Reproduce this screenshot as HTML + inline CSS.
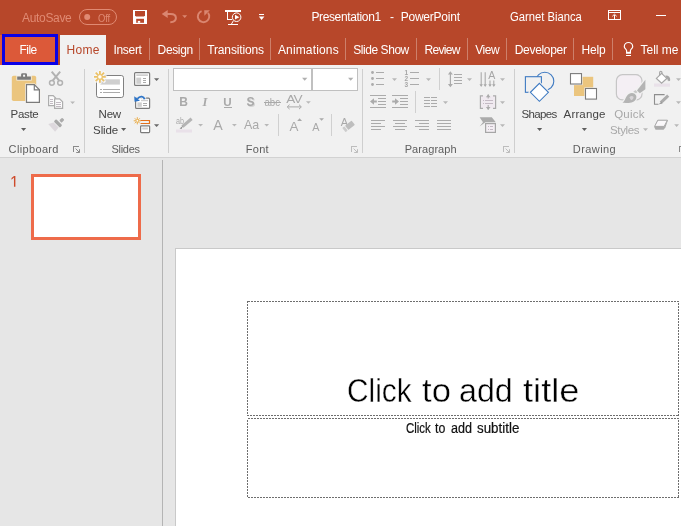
<!DOCTYPE html>
<html lang="en">
<head>
<meta charset="utf-8">
<title>Presentation1 - PowerPoint</title>
<style>
html,body{margin:0;padding:0;}
body{width:681px;height:526px;overflow:hidden;position:relative;background:#E6E6E6;font-family:"Liberation Sans",sans-serif;font-size:12px;color:#444;}
.abs{position:absolute;}
.t{position:absolute;white-space:nowrap;line-height:16px;height:16px;font-size:12px;}
#titlebar{left:0;top:0;width:681px;height:65px;background:#B7472A;}
#ribbon{left:0;top:65px;width:681px;height:92px;background:#F1F1F1;}
#ribbonline{left:0;top:157px;width:681px;height:1px;background:#D2D2D2;}
.tsep{position:absolute;top:38px;width:1px;height:22px;background:#CD806B;}
.gsep{position:absolute;top:69px;width:1px;height:84px;background:#CFCFCF;}
.isep{position:absolute;width:1px;background:#D0D0D0;}
svg{position:absolute;overflow:visible;}
</style>
</head>
<body>
<div id="app" style="position:absolute;left:0;top:0;width:681px;height:526px;overflow:hidden;will-change:transform;">
<!-- ===== backgrounds ===== -->
<div id="titlebar" class="abs"></div>
<div id="ribbon" class="abs"></div>
<div id="ribbonline" class="abs"></div>
<div class="abs" id="filehover" style="left:0;top:35px;width:3px;height:30px;background:#DC5939;"></div>
<div class="abs" id="filebox" style="left:2px;top:34px;width:50px;height:25px;border:3px solid #0A00E6;background:#DC5939;"></div>
<div class="abs" id="hometab" style="left:60px;top:35px;width:46px;height:31px;background:#F1F1F1;"></div>

<!-- ===== texts ===== -->
<div class="t" id="autosave" style="left:22.1px;top:9.5px;letter-spacing:-0.34px;color:#E08A73;">AutoSave</div>
<div class="t" id="off" style="left:98.3px;top:9.5px;letter-spacing:-0.2px;color:#E08A73;font-size:11px;transform:scaleX(0.86);transform-origin:0 50%;">Off</div>
<div class="t" id="ttl1" style="left:311.4px;top:9px;letter-spacing:-0.36px;color:#fff;">Presentation1</div>
<div class="t" id="ttl2" style="left:390px;top:9px;letter-spacing:0px;color:#fff;">-</div>
<div class="t" id="ttl3" style="left:400.7px;top:9px;letter-spacing:-0.23px;color:#fff;">PowerPoint</div>
<div class="t" id="user" style="left:509.6px;top:8.5px;color:#fff;transform:scaleX(0.937);transform-origin:0 50%;">Garnet Bianca</div>
<div class="t" id="tfile" style="left:19.5px;top:42px;letter-spacing:-0.55px;color:#fff;">File</div>
<div class="t" id="thome" style="left:66.5px;top:42px;letter-spacing:0.33px;color:#B7472A;">Home</div>
<div class="t" id="tinsert" style="left:113.5px;top:42px;letter-spacing:-0.32px;color:#fff;">Insert</div>
<div class="t" id="tdesign" style="left:157.6px;top:42px;letter-spacing:-0.36px;color:#fff;">Design</div>
<div class="t" id="ttrans" style="left:207.3px;top:42px;letter-spacing:-0.16px;color:#fff;">Transitions</div>
<div class="t" id="tanim" style="left:277.9px;top:42px;letter-spacing:0.16px;color:#fff;">Animations</div>
<div class="t" id="tshow" style="left:353.3px;top:42px;letter-spacing:-0.45px;color:#fff;">Slide Show</div>
<div class="t" id="treview" style="left:424.5px;top:42px;letter-spacing:-0.68px;color:#fff;">Review</div>
<div class="t" id="tview" style="left:475.3px;top:42px;letter-spacing:-0.51px;color:#fff;">View</div>
<div class="t" id="tdev" style="left:514.7px;top:42px;letter-spacing:-0.3px;color:#fff;">Developer</div>
<div class="t" id="thelp" style="left:581.6px;top:42px;letter-spacing:-0.24px;color:#fff;">Help</div>
<div class="t" id="ttell" style="left:640.6px;top:42px;letter-spacing:-0.04px;color:#fff;">Tell me</div>
<div class="t" id="bpaste" style="left:10.6px;top:105.7px;letter-spacing:-0.33px;font-size:11.5px;color:#444;">Paste</div>
<div class="t" id="bnew" style="left:98.6px;top:105.7px;letter-spacing:-0.25px;font-size:11.5px;color:#444;">New</div>
<div class="t" id="bslide" style="left:93.1px;top:121.5px;letter-spacing:-0.12px;font-size:11.5px;color:#444;">Slide</div>
<div class="t" id="bshapes" style="left:521.5px;top:105.7px;letter-spacing:-0.63px;font-size:11.5px;color:#444;">Shapes</div>
<div class="t" id="barrange" style="left:563.6px;top:105.7px;letter-spacing:0.15px;font-size:11.5px;color:#444;">Arrange</div>
<div class="t" id="bquick" style="left:614.2px;top:105.7px;letter-spacing:0.24px;font-size:11.5px;color:#A8A8A8;">Quick</div>
<div class="t" id="bstyles" style="left:610.0px;top:121.5px;letter-spacing:-0.37px;font-size:11.5px;color:#A8A8A8;">Styles</div>
<div class="t" id="gclip" style="left:8.6px;top:141px;letter-spacing:0.35px;font-size:11px;color:#5E5E5E;">Clipboard</div>
<div class="t" id="gslides" style="left:111.4px;top:141px;letter-spacing:-0.25px;font-size:11px;color:#5E5E5E;">Slides</div>
<div class="t" id="gfont" style="left:245.8px;top:141px;letter-spacing:0.28px;font-size:11px;color:#5E5E5E;">Font</div>
<div class="t" id="gpara" style="left:404.7px;top:141px;letter-spacing:0.07px;font-size:11px;color:#5E5E5E;">Paragraph</div>
<div class="t" id="gdraw" style="left:572.8px;top:141px;letter-spacing:0.43px;font-size:11px;color:#5E5E5E;">Drawing</div>


<!-- ===== tab separators ===== -->
<div class="tsep" style="left:149px"></div>
<div class="tsep" style="left:199px"></div>
<div class="tsep" style="left:270px"></div>
<div class="tsep" style="left:345px"></div>
<div class="tsep" style="left:416px"></div>
<div class="tsep" style="left:467px"></div>
<div class="tsep" style="left:506px"></div>
<div class="tsep" style="left:573px"></div>
<div class="tsep" style="left:612px"></div>

<!-- ===== group separators ===== -->
<div class="gsep" style="left:84px"></div>
<div class="gsep" style="left:168px"></div>
<div class="gsep" style="left:362px"></div>
<div class="gsep" style="left:514px"></div>
<div class="isep" style="left:278px;top:114px;height:22px;"></div>
<div class="isep" style="left:331px;top:114px;height:22px;"></div>
<div class="isep" style="left:439px;top:68px;height:22px;"></div>
<div class="isep" style="left:415px;top:91px;height:22px;"></div>

<!-- font boxes -->
<div class="abs" id="fontbox" style="left:173px;top:68px;width:137px;height:21px;border:1px solid #C0C0C0;background:#fff;"></div>
<div class="abs" id="sizebox" style="left:311px;top:68px;width:44px;height:21px;border:1px solid #C0C0C0;border-left-width:2px;background:#fff;"></div>

<!-- ===== title bar icons ===== -->
<svg id="qat" style="left:0;top:0;" width="681" height="65" viewBox="0 0 681 65">
 <!-- autosave toggle -->
 <rect x="79.5" y="9.5" width="37" height="15" rx="7.5" fill="none" stroke="#E08A73" stroke-width="1"/>
 <circle cx="87.2" cy="17" r="3" fill="#E08A73"/>
 <!-- save -->
 <g>
  <rect x="133" y="10" width="14" height="14" fill="#fff"/>
  <path d="M135,11.1 H145 V15.2 L144,16.4 H136 L135,15.2 Z" fill="#B7472A"/>
  <rect x="136.2" y="18.8" width="7.8" height="4" fill="#B7472A"/>
  <rect x="137.8" y="20.9" width="2.4" height="1.9" fill="#fff"/>
 </g>
 <!-- undo -->
 <path d="M161.7,14 L167.7,9.9 V18 Z" fill="#DA8670"/>
 <path d="M167,14 H170.6 C174.4,14 175.9,16.2 175.9,18.1 C175.9,20.4 174,22.2 170.3,22.2" fill="none" stroke="#DA8670" stroke-width="2"/>
 <path d="M182.2,15.3 h5 l-2.5,2.6 z" fill="#DA8670"/>
 <!-- repeat -->
 <g fill="none" stroke="#DA8670" stroke-width="1.8">
  <path d="M201.6,11.1 A5.7,5.7 0 1 0 208,12.9" stroke-width="1.9"/>
  <path d="M204.2,10.3 H209.9 L204.4,15.7 Z" fill="#DA8670" stroke="none"/>
 </g>
 <!-- start from beginning -->
 <g shape-rendering="crispEdges" fill="#fff">
  <rect x="225" y="10" width="16" height="2"/>
  <rect x="227" y="12" width="1" height="8"/>
  <rect x="227" y="19" width="5" height="1"/>
  <rect x="228" y="24" width="10" height="1"/>
 </g>
 <path d="M233.5,20.5 L231.5,24" stroke="#fff" stroke-width="1" fill="none"/>
 <circle cx="236.6" cy="17.2" r="4.3" fill="#B7472A" stroke="#fff" stroke-width="1"/>
 <path d="M235,14.8 V19.6 L239.3,17.2 Z" fill="#fff"/>
 <!-- customize qat -->
 <rect x="259" y="14" width="5" height="1" fill="#fff" shape-rendering="crispEdges"/>
 <path d="M258.8,16.6 h5.6 l-2.8,3.4 z" fill="#fff"/>
 <!-- ribbon display options -->
 <g shape-rendering="crispEdges" fill="none" stroke="#fff" stroke-width="1">
  <rect x="608.5" y="10.5" width="12" height="9"/>
  <path d="M609,12.5 H620"/>
  <path d="M614.5,14.5 V19"/>
 </g>
 <path d="M612.3,16.3 L614.5,14.2 L616.7,16.3" fill="none" stroke="#fff" stroke-width="1"/>
 <!-- minimize -->
 <rect x="656" y="15" width="10" height="1" fill="#fff" shape-rendering="crispEdges"/>
 <!-- light bulb -->
 <path d="M626.6,52.2 V50.8 C626.6,49.2 624.3,48.6 624.3,46.7 A4.2,4.2 0 1 1 632.7,46.7 C632.7,48.6 630.4,49.2 630.4,50.8 V52.2" fill="none" stroke="#fff" stroke-width="1.2"/>
 <rect x="626" y="51.8" width="5" height="2" fill="#fff"/>
 <rect x="626" y="55" width="5" height="1" fill="#fff"/>
</svg>

<!-- ===== ribbon icons: clipboard + slides ===== -->
<svg id="rib1" style="left:0;top:0;" width="681" height="160" viewBox="0 0 681 160">
 <!-- paste -->
 <rect x="11.8" y="75.7" width="24.4" height="25.4" rx="1.8" fill="#EBC57E"/>
 <rect x="16.4" y="72.4" width="15.3" height="8.2" fill="#F1F1F1" opacity=".9"/>
 <path d="M17.2,76.4 H21.1 V74.6 Q21.1,73.2 22.5,73.2 H25.6 Q27,73.2 27,74.6 V76.4 H30.9 V79.8 H17.2 Z" fill="#7B7B7B"/>
 <rect x="23.1" y="74.7" width="2" height="2" fill="#F6F6F6"/>
 <path d="M25.2,83.4 H34.8 L40.7,89.2 V103.6 H25.2 Z" fill="#F4F1EC"/>
 <path d="M26.5,84.7 H34.3 L39.4,89.8 V102.3 H26.5 Z" fill="#fff" stroke="#7B7B7B" stroke-width="1.2" stroke-linejoin="miter"/>
 <path d="M34.3,84.7 V89.8 H39.4" fill="none" stroke="#7B7B7B" stroke-width="1.2"/>
 <path d="M21,128 h5.2 l-2.6,3 z" fill="#5E5E5E"/>
 <!-- cut -->
 <g fill="none" stroke="#B2B2B2" stroke-width="1.5">
  <path d="M51.7,71.6 L59.2,80.6" stroke-width="2"/>
  <path d="M60.2,71.6 L52.7,80.6" stroke-width="2"/>
  <circle cx="51.9" cy="82.8" r="2.4"/>
  <circle cx="60.1" cy="82.8" r="2.4"/>
 </g>
 <!-- copy -->
 <g fill="#FBFBFB" stroke="#ADADAD" stroke-width="1.2">
  <path d="M48.6,95.6 H53.2 L55.6,98 V105.6 H48.6 Z"/>
  <path d="M54.6,98.8 H59.6 L62.6,101.8 V108.3 H54.6 Z"/>
 </g>
 <g stroke="#C2BAC2" stroke-width="1" fill="none" shape-rendering="crispEdges">
  <path d="M50,99.5 H53 M50,101.5 H53 M50,103.5 H53"/>
  <path d="M56,102.5 H61 M56,104.5 H61 M56,106.5 H61"/>
 </g>
 <path d="M70.2,101.4 h4.8 l-2.4,2.5 z" fill="#B8B8B8"/>
 <!-- format painter -->
 <g transform="translate(58,123.4) rotate(45)">
  <rect x="-1.2" y="-7" width="3.2" height="4" rx=".8" fill="#ABABAB"/>
  <rect x="-4.35" y="-1.65" width="8.7" height="3.3" rx="1" fill="#A8A8A8"/>
  <path d="M-3.7,2.4 H3.3 L3.9,8 L-6.4,7.4 Z" fill="#DDD8DD"/>
 </g>
 <!-- clipboard launcher -->
 <g fill="none" stroke="#8A8A8A" stroke-width="1" shape-rendering="crispEdges">
  <path d="M73.5,152 V146.5 H79"/>
 </g>
 <path d="M75.6,148.6 L79.4,152.4 M79.5,149.2 V152.5 H76.2" stroke="#8A8A8A" stroke-width="1" fill="none"/>

 <!-- new slide -->
 <rect x="96.5" y="75.5" width="27" height="22" rx="2.2" fill="#fff" stroke="#808080" stroke-width="1"/>
 <rect x="100.3" y="79.3" width="19.6" height="5.3" fill="#CFCFCF"/>
 <g stroke="#ABABAB" stroke-width="1" shape-rendering="crispEdges">
  <path d="M100,89.5 H102 M103,89.5 H120 M100,92.5 H102 M103,92.5 H120"/>
 </g>
 <g stroke="#F6F6F6" stroke-width="3.4" stroke-linecap="round">
  <path d="M99.9,71 V82.8 M94,76.9 H105.8 M95.7,72.7 L104.1,81.1 M104.1,72.7 L95.7,81.1"/>
 </g>
 <g stroke="#EBC268" stroke-width="1.8">
  <path d="M99.9,71 V82.8 M94,76.9 H105.8 M95.7,72.7 L104.1,81.1 M104.1,72.7 L95.7,81.1"/>
 </g>
 <circle cx="99.9" cy="76.9" r="2.3" fill="#fff" stroke="#EBC268" stroke-width="1"/>
 <path d="M121,128 h5.2 l-2.6,3 z" fill="#5E5E5E"/>
 <!-- layout -->
 <rect x="134.6" y="72.6" width="15" height="12.8" rx="1" fill="#fff" stroke="#7B7B7B" stroke-width="1.2"/>
 <rect x="136.3" y="74.3" width="11.6" height="1.7" fill="#CFCFCF"/>
 <rect x="136.3" y="77.6" width="4.8" height="6.2" fill="#CFCFCF"/>
 <g stroke="#ABABAB" stroke-width="1" shape-rendering="crispEdges"><path d="M142.5,78.5 H146 M142.5,80.5 H146 M142.5,82.5 H146"/></g>
 <path d="M154,78.3 h5.2 l-2.6,2.8 z" fill="#6A6A6A"/>
 <!-- reset -->
 <rect x="135.6" y="98.2" width="14" height="10.2" rx="1" fill="#fff" stroke="#7B7B7B" stroke-width="1.2"/>
 <rect x="141" y="99.8" width="7" height="1.4" fill="#CFCFCF"/>
 <rect x="137.4" y="102.4" width="4.4" height="4.4" fill="#CFCFCF"/>
 <g stroke="#ABABAB" stroke-width="1" shape-rendering="crispEdges"><path d="M143,103.5 H147 M143,105.5 H147"/></g>
 <path d="M144.6,99 C143.8,96.6 140.6,95.4 137.8,98.6" fill="none" stroke="#F1F1F1" stroke-width="4"/>
 <path d="M144.6,99.2 C143.8,96.4 140.2,95.2 137.4,98.8" fill="none" stroke="#2E75C8" stroke-width="1.8"/>
 <path d="M134.2,96.2 L134.6,101.8 L140,100.8 Z" fill="#2E75C8"/>
 <!-- section -->
 <g stroke="#E9AE4E" stroke-width="1">
  <path d="M137.3,117.2 V124.4 M133.7,120.8 H140.9 M134.8,118.3 L139.8,123.3 M139.8,118.3 L134.8,123.3"/>
 </g>
 <circle cx="137.3" cy="120.8" r="1.3" fill="#fff" stroke="#E9AE4E" stroke-width=".8"/>
 <path d="M140.6,120.5 H149.5 V123.5 H140.6" fill="none" stroke="#E2711D" stroke-width="1.2"/>
 <rect x="140.6" y="125.8" width="9" height="6.8" rx=".8" fill="#fff" stroke="#7B7B7B" stroke-width="1.2"/>
 <rect x="142.3" y="127.5" width="5.6" height="2" fill="#CFCFCF"/>
 <path d="M154,124.3 h5.2 l-2.6,2.8 z" fill="#6A6A6A"/>
</svg>

<!-- ===== ribbon icons: font group ===== -->
<svg id="rib2" style="left:0;top:0;" width="681" height="160" viewBox="0 0 681 160" font-family="Liberation Sans, sans-serif" fill="#A9A9A9">
 <!-- combo arrows -->
 <path d="M302,77.8 h5.4 l-2.7,3 z" fill="#B0B0B0"/>
 <path d="M348,77.8 h5.4 l-2.7,3 z" fill="#B0B0B0"/>
 <!-- B I U S abc AV -->
 <text x="179.2" y="105.8" font-size="12" font-weight="bold">B</text>
 <text x="202.4" y="105.8" font-size="12.5" font-family="Liberation Serif, serif" font-style="italic" font-weight="bold">I</text>
 <text x="223.2" y="105.6" font-size="11.6" font-weight="bold" textLength="8.4" lengthAdjust="spacingAndGlyphs">U</text>
 <rect x="223.6" y="107" width="8.2" height="1" shape-rendering="crispEdges"/>
 <text x="247.4" y="106.8" font-size="12" font-weight="bold" fill="#D6D6D6">S</text>
 <text x="246.4" y="105.8" font-size="12" font-weight="bold">S</text>
 <text x="264.4" y="106" font-size="10.5" textLength="15.6" lengthAdjust="spacingAndGlyphs">abc</text>
 <rect x="263.6" y="102.4" width="17" height="1" shape-rendering="crispEdges"/>
 <text x="286.2" y="102.8" font-size="10.6" textLength="15.6" lengthAdjust="spacingAndGlyphs" letter-spacing="-0.6">AV</text>
 <path d="M287.6,106.9 H301" stroke="#A9A9A9" stroke-width="1" fill="none"/>
 <path d="M289.6,104.7 L287.2,106.9 L289.6,109.1 M299,104.7 L301.4,106.9 L299,109.1" stroke="#A9A9A9" stroke-width="1" fill="none"/>
 <path d="M306,101.2 h4.8 l-2.4,2.6 z" fill="#B8B8B8"/>
 <!-- highlight -->
 <text x="176" y="123.8" font-size="8.5" textLength="8" lengthAdjust="spacingAndGlyphs">ab</text>
 <path d="M191.6,118.8 L182.4,126.6" stroke="#B4B4B4" stroke-width="3.2" fill="none"/>
 <path d="M183.2,125.4 L179.6,128.6 L181.6,128.9 Z" fill="#8E8E8E"/>
 <rect x="176" y="129.4" width="16" height="3.2" fill="#E9E1E9"/>
 <path d="M198.2,123.9 h4.8 l-2.4,2.6 z" fill="#B8B8B8"/>
 <!-- font colour A -->
 <text x="213.2" y="129.6" font-size="14.2">A</text>
 <path d="M232,123.9 h4.8 l-2.4,2.6 z" fill="#B8B8B8"/>
 <!-- change case -->
 <text x="244" y="129.4" font-size="12.8" textLength="15.2" lengthAdjust="spacingAndGlyphs">Aa</text>
 <path d="M264.3,123.9 h4.8 l-2.4,2.6 z" fill="#B8B8B8"/>
 <!-- grow / shrink -->
 <text x="289.4" y="130.6" font-size="13.4">A</text>
 <path d="M297.2,121 h4.8 l-2.4,-2.7 z" fill="#A9A9A9"/>
 <text x="312.2" y="130.6" font-size="10.8">A</text>
 <path d="M319.2,118.2 h4.8 l-2.4,2.6 z" fill="#A9A9A9"/>
 <!-- clear formatting -->
 <text x="340.8" y="126.2" font-size="11">A</text>
 <g transform="translate(349.9,125.3) rotate(-38.5)">
  <rect x="-4" y="-2.7" width="8.2" height="5.4" rx=".6" fill="#BEBEBE"/>
  <rect x="-7.6" y="-2.7" width="2.6" height="5.4" rx=".6" fill="#CDCDCD"/>
 </g>
 <!-- launcher -->
 <path d="M351.5,152 V146.5 H357" fill="none" stroke="#BDBDBD" stroke-width="1" shape-rendering="crispEdges"/>
 <path d="M353.6,148.6 L357.4,152.4 M357.5,149.2 V152.5 H354.2" stroke="#BDBDBD" stroke-width="1" fill="none"/>
</svg>

<!-- ===== ribbon icons: paragraph group ===== -->
<svg id="rib3" style="left:0;top:0;" width="681" height="160" viewBox="0 0 681 160" font-family="Liberation Sans, sans-serif" fill="#ABABAB">
 <g stroke="#ABABAB" stroke-width="1" fill="none" shape-rendering="crispEdges">
  <!-- bullets lines -->
  <path d="M376,72.5 H384 M376,78.5 H384 M376,84.5 H384"/>
  <!-- numbering lines -->
  <path d="M410,72.5 H419 M410,78.5 H419 M410,84.5 H419"/>
  <!-- line spacing lines -->
  <path d="M454,74.5 H462 M454,77.5 H462 M454,80.5 H462 M454,83.5 H462"/>
  <!-- decrease indent -->
  <path d="M370,95.5 H386 M378,98.5 H386 M378,101.5 H386 M378,104.5 H386 M370,107.5 H386"/>
  <!-- increase indent -->
  <path d="M392,95.5 H408 M400,98.5 H408 M400,101.5 H408 M400,104.5 H408 M392,107.5 H408"/>
  <!-- columns -->
  <path d="M424,97.5 H430 M431,97.5 H437 M424,100.5 H430 M431,100.5 H437 M424,103.5 H430 M431,103.5 H437 M424,106.5 H430 M431,106.5 H437"/>
  <!-- align left -->
  <path d="M371,120.5 H385 M371,123.5 H381 M371,126.5 H385 M371,129.5 H381"/>
  <!-- center -->
  <path d="M393,120.5 H407 M395,123.5 H405 M393,126.5 H407 M395,129.5 H405"/>
  <!-- right -->
  <path d="M415,120.5 H429 M419,123.5 H429 M415,126.5 H429 M419,129.5 H429"/>
  <!-- justify -->
  <path d="M437,120.5 H451 M437,123.5 H451 M437,126.5 H451 M437,129.5 H451"/>
 </g>
 <!-- bullets dots -->
 <circle cx="372.5" cy="72.5" r="1.4"/><circle cx="372.5" cy="78.5" r="1.4"/><circle cx="372.5" cy="84.5" r="1.4"/>
 <!-- numbering digits -->
 <text x="404.6" y="75" font-size="6.5" font-weight="bold" fill="#A6A6A6">1</text>
 <text x="404.6" y="81" font-size="6.5" font-weight="bold" fill="#A6A6A6">2</text>
 <text x="404.6" y="87" font-size="6.5" font-weight="bold" fill="#A6A6A6">3</text>
 <!-- dropdown arrows -->
 <g fill="#B8B8B8">
  <path d="M392,78.2 h5 l-2.5,2.7 z"/>
  <path d="M426,78.2 h5 l-2.5,2.7 z"/>
  <path d="M467,78.2 h5 l-2.5,2.7 z"/>
  <path d="M500,78.2 h5 l-2.5,2.7 z"/>
  <path d="M443,101.2 h5 l-2.5,2.7 z"/>
  <path d="M500,101.2 h5 l-2.5,2.7 z"/>
  <path d="M500,124.2 h5 l-2.5,2.7 z"/>
 </g>
 <!-- indent arrows -->
 <path d="M376.8,100.4 H374 V98.2 L370,101.5 L374,104.8 V102.6 H376.8 Z"/>
 <path d="M392.2,100.4 H395 V98.2 L399,101.5 L395,104.8 V102.6 H392.2 Z"/>
 <!-- line spacing arrow -->
 <path d="M450.4,72.6 V85.8" stroke="#ABABAB" stroke-width="1.2" fill="none"/>
 <path d="M447.9,74.4 L450.4,71.2 L452.9,74.4 Z M447.9,84 L450.4,87.2 L452.9,84 Z" fill="#ABABAB"/>
 <!-- text direction -->
 <g stroke="#ABABAB" stroke-width="1.1" fill="none">
  <path d="M481.2,72.2 V86 M485.2,72.2 V86 M490,80.6 V86 M493.8,80.6 V86"/>
 </g>
 <path d="M479.5,84.2 H482.9 L481.2,87 Z M483.5,84.2 H486.9 L485.2,87 Z M488.3,84.2 H491.7 L490,87 Z M492.1,84.2 H495.5 L493.8,87 Z" fill="#ABABAB"/>
 <text x="488.2" y="79.2" font-size="10.6" fill="#A6A6A6">A</text>
 <!-- align text -->
 <rect x="480.5" y="95.8" width="15" height="12.6" fill="#F0EAF0"/>
 <g stroke="#ABABAB" stroke-width="1.2" fill="none">
  <path d="M483,95.8 H480.4 V108.4 H483 M493,95.8 H495.6 V108.4 H493"/>
 </g>
 <g stroke="#ABABAB" stroke-width="1.1" fill="none">
  <path d="M488.2,94.6 V98.6 M488.2,105 V109.6"/>
 </g>
 <path d="M485.9,97.2 L488.2,94.2 L490.5,97.2 Z M485.9,107 L488.2,110 L490.5,107 Z" fill="#ABABAB"/>
 <g stroke="#C4BAC4" stroke-width="1" shape-rendering="crispEdges"><path d="M483,100.5 H484 M485,100.5 H493 M483,103.5 H484 M485,103.5 H493"/></g>
 <!-- smartart -->
 <path d="M479.6,117.2 H491.8 L495.8,122.2 H485.4 L479.6,126.6 L483,122.2 Z" fill="#ABABAB"/>
 <rect x="485.6" y="123.6" width="9.8" height="8.8" fill="#F4EFF4" stroke="#A6A6A6" stroke-width="1.2"/>
 <g stroke="#C4BAC4" stroke-width="1" shape-rendering="crispEdges"><path d="M488,126.5 H489 M490,126.5 H493 M488,129.5 H489 M490,129.5 H493"/></g>
 <!-- launcher -->
 <path d="M503.5,152 V146.5 H509" fill="none" stroke="#BDBDBD" stroke-width="1" shape-rendering="crispEdges"/>
 <path d="M505.6,148.6 L509.4,152.4 M509.5,149.2 V152.5 H506.2" stroke="#BDBDBD" stroke-width="1" fill="none"/>
</svg>

<!-- ===== ribbon icons: drawing group ===== -->
<svg id="rib4" style="left:0;top:0;" width="681" height="160" viewBox="0 0 681 160">
 <!-- shapes -->
 <circle cx="544.8" cy="81.3" r="9" fill="#F1F1F1" stroke="#3E7AC2" stroke-width="1.1"/>
 <rect x="525.4" y="76.7" width="16" height="15.6" fill="#F1F1F1" stroke="#3E7AC2" stroke-width="1.1"/>
 <path d="M539.4,83.3 L548.4,92.3 L539.4,101.3 L530.4,92.3 Z" fill="#fff" stroke="#F1F1F1" stroke-width="3.2"/>
 <path d="M539.4,83.3 L548.4,92.3 L539.4,101.3 L530.4,92.3 Z" fill="#fff" stroke="#3E7AC2" stroke-width="1.1"/>
 <path d="M537,128 h5.2 l-2.6,3 z" fill="#5E5E5E"/>
 <!-- arrange -->
 <rect x="574" y="76.8" width="19.2" height="19.2" fill="#EBC57E"/>
 <rect x="569.4" y="72.5" width="13.2" height="12.6" fill="#F1F1F1"/>
 <rect x="570.5" y="73.6" width="11" height="10.4" fill="#fff" stroke="#7B7B7B" stroke-width="1.1"/>
 <rect x="584.4" y="87.4" width="13.2" height="12.8" fill="#F1F1F1"/>
 <rect x="585.5" y="88.5" width="11" height="10.6" fill="#fff" stroke="#7B7B7B" stroke-width="1.1"/>
 <path d="M581.8,128 h5.2 l-2.6,3 z" fill="#5E5E5E"/>
 <!-- quick styles -->
 <rect x="616.4" y="74.7" width="25.6" height="25.2" rx="6" fill="#F4EFF4" stroke="#C6C6C6" stroke-width="1.2"/>
 <path d="M646,79.6 V88.6 L639.4,93.4 L636,90.4 Z" fill="#F1F1F1" stroke="#F1F1F1" stroke-width="2.4"/>
 <path d="M645.4,79.8 V89.2 L639.8,93.2 L637,90.4 Z" fill="#B4B4B4"/>
 <path d="M637.4,92 L635,94.4 L632.8,92.2 L635.4,90 Z" fill="#C8C8C8"/>
 <path d="M622.4,102.8 C625.4,101 625.2,96.6 628.8,94 C631.8,92 635.4,93.2 636.2,95.8 C637,98.8 635,101.6 631.6,102.4 C628.6,103 625.2,103 622.4,102.8 Z" fill="#F1F1F1" stroke="#F1F1F1" stroke-width="2.4"/>
 <path d="M622.4,102.8 C625.4,101 625.2,96.6 628.8,94 C631.8,92 635.4,93.2 636.2,95.8 C637,98.8 635,101.6 631.6,102.4 C628.6,103 625.2,103 622.4,102.8 Z" fill="#B4B4B4"/>
 <path d="M629.4,97.2 C630.6,95.8 632.6,95.6 633.4,96.8 C634,98.2 632.8,99.8 631,100.2 Z" fill="#D8D4D8"/>
 <path d="M643,128.2 h5 l-2.5,2.8 z" fill="#B8B8B8"/>
 <!-- shape fill -->
 <rect x="654" y="83.5" width="16" height="3.2" fill="#E9E1E9"/>
 <path d="M661.6,73.4 L666.8,78.4 L661.6,83.2 L656.4,78.4 Z" fill="#fff" stroke="#A6A6A6" stroke-width="1.2"/>
 <path d="M659.6,75.4 V72.6 Q659.6,71.4 660.8,71.4 Q662,71.4 662,72.6 V74" fill="none" stroke="#A6A6A6" stroke-width="1.1"/>
 <path d="M665.4,75.6 C668.6,75.4 670.4,77.4 670.2,80 C670.1,81.6 667.8,81.6 667.6,80 C667.4,78.8 667,78.2 666.2,77.6 Z" fill="#A6A6A6"/>
 <path d="M676,78.2 h5 l-2.5,2.7 z" fill="#B8B8B8"/>
 <!-- shape outline -->
 <path d="M664.6,94.6 H654.5 V104.3 H658.4" fill="none" stroke="#8E8E8E" stroke-width="1.1"/>
 <path d="M668.2,95.6 L660.8,102.6" stroke="#ABABAB" stroke-width="3" fill="none"/>
 <path d="M661.6,101.4 L658.4,104.4 L662.4,103.6 Z" fill="#9A9A9A"/>
 <path d="M676,101.2 h5 l-2.5,2.7 z" fill="#B8B8B8"/>
 <!-- shape effects -->
 <path d="M657.6,120 H668 L665.4,127.6 L663.6,129.8 H655.6 L654.2,127 Z" fill="#ABABAB"/>
 <path d="M657.8,120.2 H667.4 L664.2,126.4 H654.6 Z" fill="#FAF8FA" stroke="#A9A9A9" stroke-width="1"/>
 <path d="M674.2,124.3 h4.8 l-2.4,2.7 z" fill="#B8B8B8"/>
 <!-- launcher (clipped at right edge) -->
 <path d="M679.5,152 V146.5 H681" fill="none" stroke="#8A8A8A" stroke-width="1" shape-rendering="crispEdges"/>
</svg>



<!-- ===== work area ===== -->
<div class="abs" id="divider" style="left:162px;top:160px;width:1px;height:366px;background:#B4B4B4;"></div>
<div class="t" id="num1" style="left:10.3px;top:173px;color:#CE4A2B;font-size:17.5px;line-height:20px;height:20px;width:10px;clip-path:inset(0 0 6.2px 0);transform:scaleX(0.9);transform-origin:0 0;">1</div>
<div class="abs" id="thumb" style="left:31px;top:174px;width:104px;height:60px;border:3px solid #EE6B4A;background:#fff;"></div>
<div class="abs" id="slide" style="left:175px;top:248px;width:520px;height:300px;border:1px solid #C9C9C9;background:#fff;"></div>
<svg id="phs" style="left:0;top:0;" width="681" height="526" shape-rendering="crispEdges">
 <rect x="247.5" y="301.5" width="431" height="114" fill="none" stroke="#6E6E6E" stroke-width="1" stroke-dasharray="2 1"/>
 <rect x="247.5" y="418.5" width="431" height="79" fill="none" stroke="#6E6E6E" stroke-width="1" stroke-dasharray="2 1"/>
</svg>
<div class="t" id="ptitle" style="left:347.2px;top:370.5px;height:40px;line-height:40px;font-size:33px;color:#000;-webkit-text-stroke:0.4px #fff;transform-origin:0 50%;transform:scaleX(0.904);">Click</div>
<div class="t" id="ptitle2" style="left:421.5px;top:370.5px;height:40px;line-height:40px;font-size:33px;color:#000;-webkit-text-stroke:0.4px #fff;transform-origin:0 50%;transform:scaleX(1.05);">to</div>
<div class="t" id="ptitle3" style="left:459.4px;top:370.5px;height:40px;line-height:40px;font-size:33px;color:#000;-webkit-text-stroke:0.4px #fff;transform-origin:0 50%;transform:scaleX(0.975);">add</div>
<div class="t" id="ptitle4" style="left:522.5px;top:370.5px;height:40px;line-height:40px;font-size:33px;color:#000;-webkit-text-stroke:0.4px #fff;transform-origin:0 50%;transform:scaleX(1.1);">title</div>
<div class="t" id="psub1" style="left:405.9px;top:420.4px;font-size:14px;color:#111;-webkit-text-stroke:0.2px #111;transform:scaleX(0.817);transform-origin:0 50%;">Click</div>
<div class="t" id="psub2" style="left:435.2px;top:420.4px;font-size:14px;color:#111;-webkit-text-stroke:0.2px #111;transform:scaleX(0.883);transform-origin:0 50%;">to</div>
<div class="t" id="psub3" style="left:450.9px;top:420.4px;font-size:14px;color:#111;-webkit-text-stroke:0.2px #111;transform:scaleX(0.899);transform-origin:0 50%;">add</div>
<div class="t" id="psub4" style="left:476.8px;top:420.4px;font-size:14px;color:#111;-webkit-text-stroke:0.2px #111;transform:scaleX(0.954);transform-origin:0 50%;">subtitle</div>
</div>
</body>
</html>
